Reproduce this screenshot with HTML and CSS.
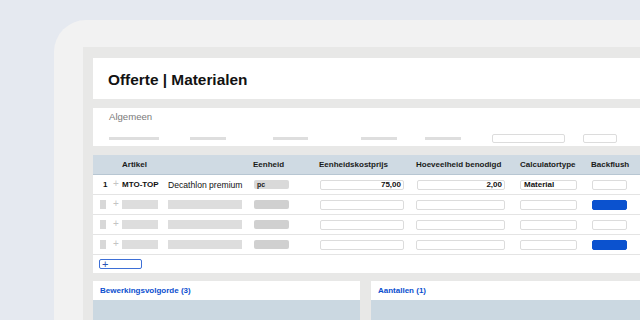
FILE: index.html
```html
<!DOCTYPE html>
<html lang="nl">
<head>
<meta charset="utf-8">
<title>Offerte | Materialen</title>
<link rel="stylesheet" href="styles.css">
</head>
<body>
<div class="frame">
  <div class="app">
    <div class="card title-card">
      <h1 class="title">Offerte | Materialen</h1>
    </div>

    <div class="card general-card">
      <div class="section-label">Algemeen</div>
      <div class="field-row">
        <span class="skel bar1"></span>
        <span class="skel bar2"></span>
        <span class="skel bar3"></span>
        <span class="skel bar4"></span>
        <span class="skel bar5"></span>
        <span class="box box1"></span>
        <span class="box box2"></span>
      </div>
    </div>

    <div class="card table-card">
      <div class="trow thead">
        <span></span><span></span>
        <span class="th">Artikel</span>
        <span></span>
        <span class="th th-shift">Eenheid</span>
        <span class="th th-shift">Eenheidskostprijs</span>
        <span class="th">Hoeveelheid benodigd</span>
        <span class="th">Calculatortype</span>
        <span class="th th-shift">Backflush</span>
      </div>

      <div class="trow">
        <span class="num">1</span>
        <span class="plus">+</span>
        <span class="code">MTO-TOP</span>
        <span class="desc">Decathlon premium</span>
        <span><span class="pill pill-light">pc</span></span>
        <span><span class="box in-price num-right">75,00</span></span>
        <span><span class="box in-qty num-right">2,00</span></span>
        <span><span class="box in-calc">Material</span></span>
        <span><span class="box in-flush"></span></span>
      </div>

      <div class="trow">
        <span><span class="sq"></span></span>
        <span class="plus">+</span>
        <span><span class="skel cell-a"></span></span>
        <span><span class="skel cell-b"></span></span>
        <span><span class="pill"></span></span>
        <span><span class="box in-price"></span></span>
        <span><span class="box in-qty2"></span></span>
        <span><span class="box in-calc"></span></span>
        <span><span class="box in-flush on"></span></span>
      </div>

      <div class="trow">
        <span><span class="sq"></span></span>
        <span class="plus">+</span>
        <span><span class="skel cell-a"></span></span>
        <span><span class="skel cell-b"></span></span>
        <span><span class="pill"></span></span>
        <span><span class="box in-price"></span></span>
        <span><span class="box in-qty2"></span></span>
        <span><span class="box in-calc"></span></span>
        <span><span class="box in-flush"></span></span>
      </div>

      <div class="trow">
        <span><span class="sq"></span></span>
        <span class="plus">+</span>
        <span><span class="skel cell-a"></span></span>
        <span><span class="skel cell-b"></span></span>
        <span><span class="pill"></span></span>
        <span><span class="box in-price"></span></span>
        <span><span class="box in-qty2"></span></span>
        <span><span class="box in-calc"></span></span>
        <span><span class="box in-flush on"></span></span>
      </div>

      <div class="add-row">
        <button class="add-btn" type="button">+</button>
      </div>
    </div>

    <div class="bottom">
      <div class="card sub-card sub-left">
        <div class="sub-title">Bewerkingsvolgorde (3)</div>
        <div class="sub-band"></div>
      </div>
      <div class="card sub-card sub-right">
        <div class="sub-title">Aantallen (1)</div>
        <div class="sub-band"></div>
      </div>
    </div>
  </div>
</div>
</body>
</html>
```

FILE: styles.css
```css
* { box-sizing: border-box; }

html, body {
  margin: 0;
  padding: 0;
  width: 640px;
  height: 320px;
  overflow: hidden;
  background: #e5e9f0;
  font-family: "Liberation Sans", Arial, sans-serif;
  color: #111;
}

.frame {
  margin: 20px 0 0 54px;
  width: 586px;
  height: 300px;
  background: #f2f2f2;
  border-top-left-radius: 32px;
  padding: 27px 0 0 29px;
}

.app {
  background: #e8e8e7;
  height: 100%;
  padding: 11px 0 0 10px;
  display: flex;
  flex-direction: column;
}

.card {
  background: #fff;
}

/* title */
.title-card {
  height: 41px;
  display: flex;
  align-items: center;
  padding: 2px 0 0 15px;
}
.title {
  margin: 0;
  font-size: 15.4px;
  font-weight: 700;
  color: #121212;
}

/* general */
.general-card {
  margin-top: 9px;
  height: 38px;
  padding: 3px 0 0 16px;
}
.section-label {
  font-size: 9.6px;
  color: #7a7a7a;
  line-height: 12px;
}
.field-row {
  display: flex;
  align-items: center;
  margin-top: 10px;
  height: 10px;
}
.skel {
  display: block;
  background: #dedede;
  height: 9px;
}
.field-row .skel { height: 3px; }
.bar1 { width: 50px; }
.bar2 { width: 36px; margin-left: 31px; }
.bar3 { width: 35px; margin-left: 47px; }
.bar4 { width: 36px; margin-left: 53px; }
.bar5 { width: 36px; margin-left: 28px; }
.box {
  display: block;
  height: 10px;
  border: 1px solid #dcdcdc;
  border-radius: 2px;
  background: #fff;
}
.box1 { width: 73px; margin-left: 31px; height: 9px; }
.box2 { width: 34px; margin-left: 18px; height: 9px; }

/* table */
.table-card {
  margin-top: 9px;
  height: 118px;
}
.trow {
  display: grid;
  grid-template-columns: 13px 9px 46px 86px 66px 96px 104px 72px 1fr;
  padding-left: 7px;
  height: 20px;
  align-items: center;
  border-bottom: 1px solid #e4e4e4;
  font-size: 8px;
}
.thead {
  background: #cfdae3;
  border-bottom: 1px solid #b7c6d2;
  height: 20px;
}
.th {
  font-weight: 700;
  color: #1a1a1a;
}
.th-shift { margin-left: -1px; }
.num { padding-left: 3px; font-weight: 700; }
.plus {
  color: #c4c4c4;
  font-size: 10px;
  line-height: 10px;
  margin-top: -1px;
}
.code { font-weight: 700; }
.desc { font-size: 8.6px; color: #111; }
.pill {
  display: block;
  width: 35px;
  height: 9px;
  border-radius: 2px;
  background: #d0d0d0;
}
.pill-light {
  background: #d9d9d9;
  font-size: 7px;
  font-weight: 700;
  line-height: 9px;
  padding-left: 3px;
  color: #222;
}
.in-price { width: 84px; }
.in-qty { width: 88px; margin-left: 1px; }
.in-qty2 { width: 89px; }
.in-calc { width: 57px; }
.in-flush { width: 35px; }
.in-flush.on {
  background: #0b52cf;
  border-color: #0b52cf;
}
.num-right {
  text-align: right;
  font-weight: 700;
  font-size: 8px;
  line-height: 8px;
  padding-right: 2px;
  color: #111;
}
.in-calc:not(:empty) {
  font-weight: 700;
  font-size: 8px;
  line-height: 8px;
  padding-left: 3px;
  color: #111;
}
.sq {
  display: block;
  width: 6px;
  height: 9px;
  background: #d8d8d8;
}
.cell-a { width: 36px; background: #dddddd; }
.cell-b { width: 74px; background: #dddddd; }

.add-row {
  height: 19px;
  padding: 4px 0 0 6px;
}
.add-btn {
  display: block;
  width: 43px;
  height: 10px;
  margin: 0;
  padding: 0 0 0 2px;
  border: 1px solid #3d6fd6;
  border-radius: 2px;
  background: #fff;
  color: #2b55b5;
  font-family: "Liberation Sans", Arial, sans-serif;
  font-size: 11px;
  line-height: 7px;
  text-align: left;
}

/* bottom */
.bottom {
  margin-top: 8px;
  display: flex;
  gap: 11px;
  flex: 1;
}
.sub-card {
  display: flex;
  flex-direction: column;
}
.sub-left { width: 267px; }
.sub-right { flex: 1; }
.sub-title {
  height: 19px;
  line-height: 19px;
  padding-left: 7px;
  font-size: 8px;
  font-weight: 700;
  color: #0b4fcf;
}
.sub-band {
  flex: 1;
  background: #cbd8e1;
}
```
